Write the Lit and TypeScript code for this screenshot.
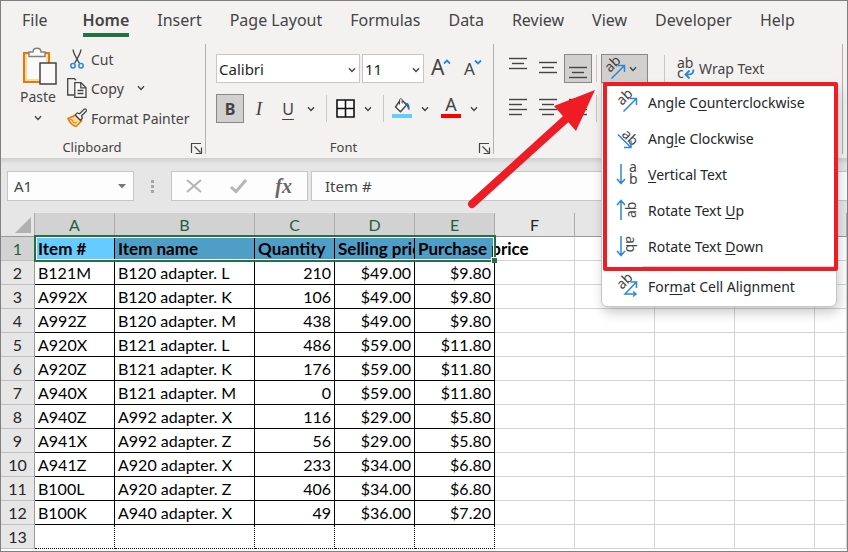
import { LitElement, html, svg, css } from "lit";
import { customElement } from "lit/decorators.js";
import { classMap } from "lit/directives/class-map.js";

const TABS = ["File", "Home", "Insert", "Page Layout", "Formulas", "Data", "Review", "View", "Developer", "Help"];
const COLUMNS = ["A", "B", "C", "D", "E", "F", "G", "H", "I", "J"];
const HEADINGS = ["Item #", "Item name", "Quantity", "Selling price", "Purchase price"];
const ITEMS = [
  ["B121M", "B120 adapter. L", "210", "$49.00", "$9.80"],
  ["A992X", "B120 adapter. K", "106", "$49.00", "$9.80"],
  ["A992Z", "B120 adapter. M", "438", "$49.00", "$9.80"],
  ["A920X", "B121 adapter. L", "486", "$59.00", "$11.80"],
  ["A920Z", "B121 adapter. K", "176", "$59.00", "$11.80"],
  ["A940X", "B121 adapter. M", "0", "$59.00", "$11.80"],
  ["A940Z", "A992 adapter. X", "116", "$29.00", "$5.80"],
  ["A941X", "A992 adapter. Z", "56", "$29.00", "$5.80"],
  ["A941Z", "A920 adapter. X", "233", "$34.00", "$6.80"],
  ["B100L", "A920 adapter. Z", "406", "$34.00", "$6.80"],
  ["B100K", "A940 adapter. X", "49", "$36.00", "$7.20"],
];

const chevron = html`<svg class="chev" width="8" height="6" viewBox="0 0 8 6"><path d="M1 1.2 4 4.4 7 1.2" fill="none" stroke="#444" stroke-width="1.4"/></svg>`;

const launcher = html`<svg width="11" height="11" viewBox="0 0 11 11" fill="none" stroke="#444"><path d="M.5 10V.5H10M3.5 3.5l6 6M10.5 4.500v6H4.500" stroke-width="1.200"/></svg>`;

const pasteIcon = html`<svg width="36" height="40" viewBox="0 0 36 40">
  <path d="M2 6h25v29H2z" fill="#fbdc9a" stroke="#e5790e" stroke-width="2"/>
  <path d="M5 8h19v24H5z" fill="#fafafa"/>
  <path d="M7 9.500V5h4c0-5 8-5 8 0h4v4.500z" fill="#fafafa" stroke="#808080" stroke-width="1.400"/>
  <path d="M18 16h16v21H18z" fill="#fafafa" stroke="#444" stroke-width="1.500"/></svg>`;

const cutIcon = html`<svg width="20" height="20" viewBox="0 0 20 20" fill="none">
  <path d="M6 .5c.3 3 2 6.500 6.500 14M14 .5c-.3 3-2 6.500-6.500 14" stroke="#444" stroke-width="1.400"/>
  <circle cx="6" cy="16.800" r="2.200" stroke="#2b88d8" stroke-width="1.500"/><circle cx="14" cy="16.800" r="2.200" stroke="#2b88d8" stroke-width="1.500"/></svg>`;

const copyIcon = html`<svg width="20" height="20" viewBox="0 0 20 20" fill="none" stroke="#444" stroke-width="1.300">
  <path d="M7 17H.7V.7h6.800L9 2.200"/>
  <path d="M7.800 4.700h6.200l5 5v9.600H7.800z" fill="#fafafa"/><path d="M13.800 4.900v5h5M10.500 12.500h6M10.500 15.500h6"/></svg>`;

const painterIcon = html`<svg width="20" height="20" viewBox="0 0 20 20">
  <path d="M1 10.500 8.500 7.200l6 5.800-5.500 5.500C5.500 17.500 2.500 14.500 1 10.500z" fill="#fbdc9a" stroke="#e5790e" stroke-width="1.500"/>
  <path d="M2.500 11.500l3 .5 1 3 3-.5" fill="none" stroke="#e5790e"/>
  <path d="M8.300 6.900l2-2 2.300.900 4.500-4.500c1.500-1 3 .5 2 2l-4.500 4.500.700 2.500-2 2z" fill="#fafafa" stroke="#444" stroke-width="1.300"/></svg>`;

const bordersIcon = html`<svg width="19" height="19" viewBox="0 0 19 19"><path d="M1 1h17v17H1zM9.500 1v17M1 9.500h17" fill="#fafafa" stroke="#111" stroke-width="1.600"/></svg>`;

const fillIcon = html`<svg width="20" height="21" viewBox="0 0 20 21">
  <path d="M8 2.500 3.500 9l5 4.700 6-6.700-4-4.500" fill="#fafafa" stroke="#444" stroke-width="1.400"/>
  <path d="M7.500 6.500V2.200c0-2 2.700-2 2.700 0v3.300" fill="none" stroke="#444"/>
  <path d="M13 4.500c4 0 5 3 4.500 8-1.500-1-2-3-3-5z" fill="#2b6ca8"/>
  <path d="M0 16h20v4H0z" fill="#66ccff"/></svg>`;

const fontColorIcon = html`<svg width="20" height="21" viewBox="0 0 20 21">
  <text x="10" y="13" text-anchor="middle" class="glyph" font-size="18">A</text>
  <path d="M0 16h20v4H0z" fill="#f00"/></svg>`;

const sizeIcon = (size: number, path: string) => html`<svg width="22" height="24" viewBox="0 0 22 24">
  <text x="0" y="18" class="glyph" font-size=${size}>A</text>
  <path d=${path} fill="none" stroke="#2b88d8" stroke-width="1.800"/></svg>`;

// Horizontal strokes, 5px apart; each pair gives the start and end of one stroke.
const lines = (rows: number[][], top: number) => html`<svg width="18" height="29" viewBox="0 0 18 29">
  ${rows.map(([a, b], i) => svg`<path d="M${a} ${top + i * 5}.5H${b}" stroke="#444" stroke-width="1.400"/>`)}</svg>`;

const vAlign = [[0, 18], [3, 15], [0, 18]];

const wrapIcon = html`<svg width="18" height="22" viewBox="0 0 18 22">
  <text x="0" y="10" class="glyph" font-size="14">ab</text><text x="0" y="20" class="glyph" font-size="14">c</text>
  <path d="M16.200 11.500c.8 4-2 5.500-8 5M12.500 12.500l-4 4 4 4" fill="none" stroke="#2b88d8" stroke-width="1.800"/></svg>`;

const ab = (transform: string) => svg`<text transform=${transform} class="glyph" font-size="14">ab</text>`;
const blue = (d: string) => svg`<path d=${d} fill="none" stroke="#2b88d8" stroke-width="1.500"/>`;
const menuSvg = (body: unknown) => html`<svg width="22" height="22" viewBox="0 0 22 22">${body}</svg>`;

const iconCounter = menuSvg([ab("translate(6 15) rotate(-45)"), blue("M7.500 20.500 20 8M13.500 7.500H20.500V14")]);
const iconClock = menuSvg([ab("translate(5 8) rotate(45)"), blue("M2 7.500 14.500 20M15 13.500V20.500H8")]);
const iconVertical = menuSvg([
  svg`<text x="13" y="9" class="glyph" font-size="14">a</text><text x="13" y="21" class="glyph" font-size="14">b</text>`,
  blue("M5 1V20M1 16 5 20.500 9 16"),
]);
const iconUp = menuSvg([ab("translate(20 19) rotate(-90)"), blue("M5 21V2M1 6 5 1.500 9 6")]);
const iconDown = menuSvg([ab("translate(10 1) rotate(90)"), blue("M5 1V20M1 16 5 20.500 9 16")]);
const iconFormat = menuSvg([ab("translate(6 15) rotate(-45)"), blue("M20 19H9L20 7.500M14.500 7H20.500V13M17 16.500l3 2.500-3 2.500")]);

const MENU = [
  { icon: iconCounter, label: html`Angle C<u>o</u>unterclockwise` },
  { icon: iconClock, label: html`Ang<u>l</u>e Clockwise` },
  { icon: iconVertical, label: html`<u>V</u>ertical Text` },
  { icon: iconUp, label: html`Rotate Text <u>U</u>p` },
  { icon: iconDown, label: html`Rotate Text <u>D</u>own` },
];

const shared = css`
  :host, * { box-sizing: border-box; }
  button, input, select {
    font: inherit; color: inherit; background: none; border: 0; padding: 0; margin: 0; border-radius: 0; outline: 0;
  }
  svg { display: block; flex: none; overflow: visible; }
  .glyph { fill: #444; font-family: "Noto Sans", sans-serif; }
`;

@customElement("ribbon-bar")
export class RibbonBar extends LitElement {
  static styles = [shared, css`
    :host { display: block; background: #f3f2f1; color: #444; }
    .tabs { display: flex; height: 41px; padding-left: 7px; }
    .tab { height: 36px; padding: 0 14px; font-size: 16px; line-height: 38px; white-space: nowrap; }
    .tab:first-child { margin-right: 7px; }
    .tab span { display: block; height: 36px; }
    .tab.on { font-weight: 600; }
    .tab.on span { border-bottom: 4px solid #217346; }
    .groups { display: flex; padding: 2px 4px 4px 0; }
    .group { position: relative; display: flex; flex-direction: column; height: 110px; border-right: 1px solid #b3b0ad; }
    .clipboard { width: 205px; }
    .font { width: 288px; padding: 0 0 0 10px; }
    .align { flex: 1; padding-left: 10px; }
    .foot { flex: none; height: 14px; margin-top: auto; font-size: 13px; line-height: 14px; padding-right: 22px; text-align: center; }
    .launch { position: absolute; right: 3px; bottom: 0; width: 11px; height: 11px; }
    .clip { display: flex; height: 90px; padding: 3px 0 0 19px; }
    .paste { display: flex; flex-direction: column; align-items: center; width: 36px; font-size: 14px; line-height: 20px; white-space: nowrap; }
    .paste svg:first-child { margin-left: 4px; }
    .paste .chev { margin-top: 8px; }
    .stack { display: flex; flex-direction: column; margin-left: 11px; }
    .cmd { display: flex; flex: none; align-items: center; height: 30px; font-size: 14px; gap: 4px; white-space: nowrap; }
    .cmd .chev { margin-left: 9px; }
    .stack .cmd:first-child { height: 26px; padding-bottom: 2px; }
    .row { display: flex; align-items: center; height: 29px; margin-top: 10px; }
    .row + .row { margin-top: 11px; }
    .pick { position: relative; height: 29px; margin-right: 2px; }
    .pick select { width: 100%; height: 29px; appearance: none; background: #fff; border: 1px solid #c8c6c4; padding-left: 2px; font-size: 15px; color: #262626; }
    .pick .chev { position: absolute; right: 4px; top: 13px; }
    .face { width: 144px; }
    .size { width: 62px; margin-right: 7px; }
    .grow { margin-right: 11px; }
    .btn { display: flex; flex: none; align-items: center; justify-content: center; width: 28px; height: 29px; font-size: 16px; }
    .style .btn { margin-right: 1px; }
    .style .sep { margin: 0 4px 0 7px; }
    .style .tint { margin-left: 4px; }
    .btn.on { background: #d2d0ce; border: 1px solid #8a8886; }
    .drop { display: flex; flex: none; align-items: center; justify-content: center; width: 16px; height: 29px; }
    .sep { width: 1px; height: 27px; background: #c8c6c4; flex: none; }
    .bold { font-weight: 700; }
    .italic { font-style: italic; font-family: "Liberation Serif", serif; font-size: 19px; }
    .under { text-decoration: underline; text-underline-offset: 4px; }
    .orient { position: relative; margin: 0 16px 0 4px; }
    .orient > .btn { width: 47px; gap: 3px; justify-content: flex-start; padding-left: 2px; }
    .wrap { display: flex; align-items: center; gap: 4px; margin-left: 12px; font-size: 14px; white-space: nowrap; }
    .tri > .btn { margin-right: 2px; }
    .tri > .btn:nth-child(3) { margin-right: 4px; }
    .orient .btn { margin: 0; }
    .menu { position: absolute; z-index: 2; left: 0; top: 29px; width: 236px; height: 224px; background: #fff; border: 1px solid #c6c6c6; border-radius: 0 0 6px 6px; box-shadow: 2px 6px 12px rgba(0, 0, 0, 0.2); }
    .item { display: flex; align-items: center; gap: 10px; width: 100%; height: 36px; padding-left: 14px; font-size: 14px; color: #262626; white-space: nowrap; text-align: left; }
    .item u { text-decoration-skip-ink: none; text-underline-offset: 2px; }
    .rule { height: 1px; margin: 2px 0 1px 41px; background: #d8d8d8; }
    .mark { position: absolute; z-index: 3; left: 2px; top: 28px; width: 235px; height: 189px; border: 4px solid #ee1c25; border-radius: 2px; pointer-events: none; }
    .arrow { position: absolute; z-index: 3; left: -135px; top: 32px; pointer-events: none; }
  `];

  render() {
    return html`
      <nav class="tabs">
        ${TABS.map((t) => html`<button class=${classMap({ tab: true, on: t === "Home" })}><span>${t}</span></button>`)}
      </nav>
      <div class="groups">
        <section class="group clipboard">
          <div class="clip">
            <button class="paste">${pasteIcon}Paste${chevron}</button>
            <div class="stack">
              <button class="cmd">${cutIcon}Cut</button>
              <button class="cmd">${copyIcon}Copy ${chevron}</button>
              <button class="cmd">${painterIcon}Format Painter</button>
            </div>
          </div>
          <div class="foot">Clipboard</div>
          <button class="launch" aria-label="Clipboard settings">${launcher}</button>
        </section>
        <section class="group font">
          <div class="row">
            <div class="pick face"><select aria-label="Font"><option>Calibri</option></select>${chevron}</div>
            <div class="pick size"><select aria-label="Font size"><option>11</option></select>${chevron}</div>
            <button class="grow" aria-label="Increase font size">${sizeIcon(21, "M13 6.500 16 3.500l3 3")}</button>
            <button aria-label="Decrease font size">${sizeIcon(17, "M11 3.500l3 3 3-3")}</button>
          </div>
          <div class="row style">
            <button class="btn on bold">B</button>
            <button class="btn italic">I</button>
            <button class="btn under">U</button>
            <button class="drop" aria-label="Underline styles">${chevron}</button>
            <span class="sep"></span>
            <button class="btn" aria-label="Borders">${bordersIcon}</button>
            <button class="drop" aria-label="Border styles">${chevron}</button>
            <span class="sep"></span>
            <button class="btn" aria-label="Fill color">${fillIcon}</button>
            <button class="drop" aria-label="Fill colors">${chevron}</button>
            <button class="btn tint" aria-label="Font color">${fontColorIcon}</button>
            <button class="drop" aria-label="Font colors">${chevron}</button>
          </div>
          <div class="foot">Font</div>
          <button class="launch" aria-label="Font settings">${launcher}</button>
        </section>
        <section class="group align">
          <div class="row tri">
            <button class="btn" aria-label="Top align">${lines(vAlign, 4)}</button>
            <button class="btn" aria-label="Middle align">${lines(vAlign, 8)}</button>
            <button class="btn on" aria-label="Bottom align">${lines(vAlign, 13)}</button>
            <span class="sep"></span>
            <div class="orient">
              <button class="btn on" aria-label="Orientation">${iconCounter}${chevron}</button>
              <div class="menu" role="menu">
                ${MENU.map((m) => html`<button class="item" role="menuitem">${m.icon}<span>${m.label}</span></button>`)}
                <div class="rule"></div>
                <button class="item" role="menuitem">${iconFormat}<span>For<u>m</u>at Cell Alignment</span></button>
              </div>
              <div class="mark"></div>
              <svg class="arrow" width="134" height="125" viewBox="466 86 134 125">
                <path d="M472 204 568 117" stroke="#ee1c25" stroke-width="8" stroke-linecap="round"/>
                <path d="M595 90 554 106l22 25z" fill="#ee1c25"/>
              </svg>
            </div>
            <span class="sep"></span>
            <button class="wrap">${wrapIcon}Wrap Text</button>
          </div>
          <div class="row tri">
            <button class="btn" aria-label="Align left">${lines([[0, 18], [0, 13], [0, 18], [0, 13]], 5)}</button>
            <button class="btn" aria-label="Center">${lines([[0, 18], [3, 15], [0, 18], [3, 15]], 5)}</button>
            <button class="btn" aria-label="Align right">${lines([[0, 18], [5, 18], [0, 18], [5, 18]], 5)}</button>
            <span class="sep"></span>
          </div>
        </section>
      </div>`;
  }
}

@customElement("formula-bar")
export class FormulaBar extends LitElement {
  static styles = [shared, css`
    :host { display: flex; flex: none; height: 55px; padding: 13px 0 12px 6px; background: linear-gradient(#cfcfcf, #e6e6e6 6px); color: #444; font-size: 15px; }
    .box { display: flex; align-items: center; height: 30px; background: #fdfdfd; border: 1px solid #c6c6c6; }
    .name { width: 127px; padding: 0 8px 0 6px; }
    .name input { width: 104px; }
    .dots { display: grid; align-content: center; gap: 2px; width: 37px; padding-left: 17px; }
    .dots i { width: 3px; height: 3px; background: #a6a6a6; }
    .tools { width: 137px; justify-content: space-between; padding: 0 15px 0 14px; }
    .fx { font: italic 700 20px "Liberation Serif", serif; color: #666; }
    .text { flex: 1; margin-left: 3px; border-right: 0; padding-left: 13px; }
    .text input { width: 100%; }
  `];

  render() {
    return html`
      <div class="box name"><input aria-label="Name box" .value=${"A1"}>
        <svg width="8" height="5" viewBox="0 0 8 5"><path d="M0 0h8L4 4.500z" fill="#777"/></svg></div>
      <div class="dots"><i></i><i></i><i></i></div>
      <div class="box tools">
        <button aria-label="Cancel"><svg width="16" height="14" viewBox="0 0 16 14"><path d="M1 1 15 13M15 1 1 13" stroke="#b5b5b5" stroke-width="2"/></svg></button>
        <button aria-label="Enter"><svg width="17" height="14" viewBox="0 0 17 14"><path d="M1 8l5 4.500L16 1" fill="none" stroke="#b5b5b5" stroke-width="3"/></svg></button>
        <button class="fx" aria-label="Insert function">fx</button>
      </div>
      <div class="box text"><input aria-label="Formula" .value=${"Item #"}></div>`;
  }
}

@customElement("work-sheet")
export class WorkSheet extends LitElement {
  static styles = [shared, css`
    :host { display: block; position: relative; flex: 1; overflow: hidden; background: #fff; font-family: Lato, sans-serif; font-size: 16px; }
    table { width: 100%; table-layout: fixed; border-collapse: separate; border-spacing: 0; }
    .c0 { width: 34px; } .c80 { width: 80px; } .c140 { width: 140px; }
    th, td { height: 24px; padding: 1px 3px 0; line-height: 20px; font-weight: 400; white-space: nowrap; border: 0 solid #d4d4d4; border-width: 0 1px 1px 0; }
    th { background: #e6e6e6; color: #262626; padding: 1px 0 0; }
    thead th { border-color: #ababab; border-bottom-color: #999; }
    tbody th { border-color: #c0c0c0; border-right-color: #999; }
    thead .sel, tbody .sel { background: #d2d2d2; color: #1f5f40; }
    .corner svg { margin: 0 3px 0 auto; }
    .data { border-color: #000; }
    .num { text-align: right; }
    .head { background: #4f9ec8; font-weight: 700; font-size: 17px; border-color: #000; overflow: hidden; }
    .head:nth-child(2) { background: #66ccff; }
    .head:nth-child(6) { overflow: visible; }
    .blank { border-style: dotted; border-color: #000; }
    .range { position: absolute; left: 33px; top: 22px; width: 462px; height: 27px; border: 2px solid #217346; box-shadow: inset 0 0 0 1px #fff; pointer-events: none; }
    .handle { position: absolute; right: -3px; bottom: -3px; width: 6px; height: 6px; background: #217346; border: 1px solid #fff; border-width: 1px 0 0 1px; }
  `];

  render() {
    return html`
      <table>
        <colgroup><col class="c0"><col class="c80"><col class="c140">${COLUMNS.slice(2, 9).map(() => html`<col class="c80">`)}<col></colgroup>
        <thead><tr>
          <th class="corner"><svg width="16" height="16" viewBox="0 0 16 16"><path d="M16 0v16H0z" fill="#b1b1b1"/></svg></th>
          ${COLUMNS.map((c, i) => html`<th class=${i < 5 ? "sel" : ""}>${c}</th>`)}
        </tr></thead>
        <tbody>
          <tr><th class="sel">1</th>${HEADINGS.map((h) => html`<td class="head">${h}</td>`)}${this.rest()}</tr>
          ${ITEMS.map((r, n) => html`<tr><th>${n + 2}</th>
            ${r.map((v, i) => html`<td class=${classMap({ data: true, num: i > 1 })}>${v}</td>`)}${this.rest()}</tr>`)}
          <tr><th>13</th>${HEADINGS.map(() => html`<td class="blank"></td>`)}${this.rest()}</tr>
        </tbody>
      </table>
      <div class="range"><span class="handle"></span></div>`;
  }

  private rest() {
    return COLUMNS.slice(5).map(() => html`<td></td>`);
  }
}

@customElement("app-root")
export class AppRoot extends LitElement {
  static styles = css`
    :host { display: flex; flex-direction: column; box-sizing: border-box; min-height: 100vh; border: 1px solid #808080; background: #e6e6e6; font-family: "Noto Sans", "Open Sans", sans-serif; overflow: hidden; }
    ribbon-bar { position: relative; z-index: 1; }
  `;

  render() {
    return html`<ribbon-bar></ribbon-bar><formula-bar></formula-bar><work-sheet></work-sheet>`;
  }
}
